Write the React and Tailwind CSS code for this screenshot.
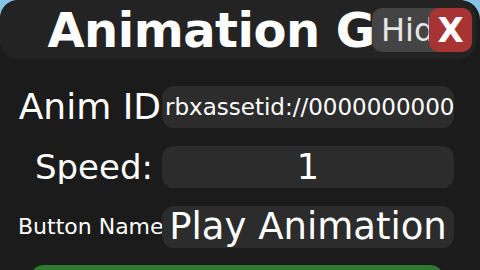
import React from "react";

const font = { fontFamily: "'DejaVu Sans', 'Noto Sans', sans-serif" };

const Row = ({ label, labelClass, value, valueClass }) => (
  <div className="flex items-center h-[42px] shrink-0">
    <div className={"w-[162px] shrink-0 overflow-hidden whitespace-nowrap text-white " + labelClass}>{label}</div>
    <div className={"w-[292px] h-[42px] shrink-0 rounded-[12px] bg-[#2c2c2c] overflow-hidden whitespace-nowrap flex items-center text-white " + valueClass}>
      {value}
    </div>
  </div>
);

const App = () => {
  return (
    <div className="w-[480px] h-[270px] bg-[#86c5e6] overflow-hidden" style={font}>
      <div className="w-[480px] h-[320px] bg-[#1b1b1b] rounded-t-[20px] flex flex-col">
        <div className="relative shrink-0 w-[476px] h-[59px] bg-[#232323] rounded-[18px] flex items-center justify-center overflow-hidden">
          <p className="text-white font-bold text-[48px] leading-none whitespace-nowrap tracking-[-0.5px] pl-[2px]">Animation GUI</p>
          <div className="absolute left-[372px] top-[8px] w-[100px] h-[44px] rounded-[10px] bg-[#444444] overflow-hidden flex items-center pl-[9px]">
            <span className="text-[#e6e6e6] text-[32px] leading-none whitespace-nowrap">Hide</span>
          </div>
          <div className="absolute left-[429px] top-[8px] w-[43px] h-[44px] rounded-[10px] bg-[#a83333] flex items-center justify-center">
            <span className="text-white font-bold text-[34px] leading-none">X</span>
          </div>
        </div>
        <div className="flex flex-col gap-[18px] mt-[27px] shrink-0">
          <Row label="Anim ID" labelClass="text-right text-[36px] leading-none pr-[1px]" value="rbxassetid://0000000000" valueClass="pl-[3px] text-[23px]" />
          <Row label="Speed:" labelClass="text-right text-[34px] leading-none pr-[9px]" value="1" valueClass="justify-center text-[35px]" />
          <Row label="Button Name" labelClass="text-left text-[22px] leading-none pl-[18px]" value="Play Animation" valueClass="justify-center text-[37px]" />
        </div>
        <div className="shrink-0 mt-[17px] ml-[30px] w-[414px] h-[44px] rounded-[14px] bg-[#2e7a31]"></div>
      </div>
    </div>
  );
};

export default App;
